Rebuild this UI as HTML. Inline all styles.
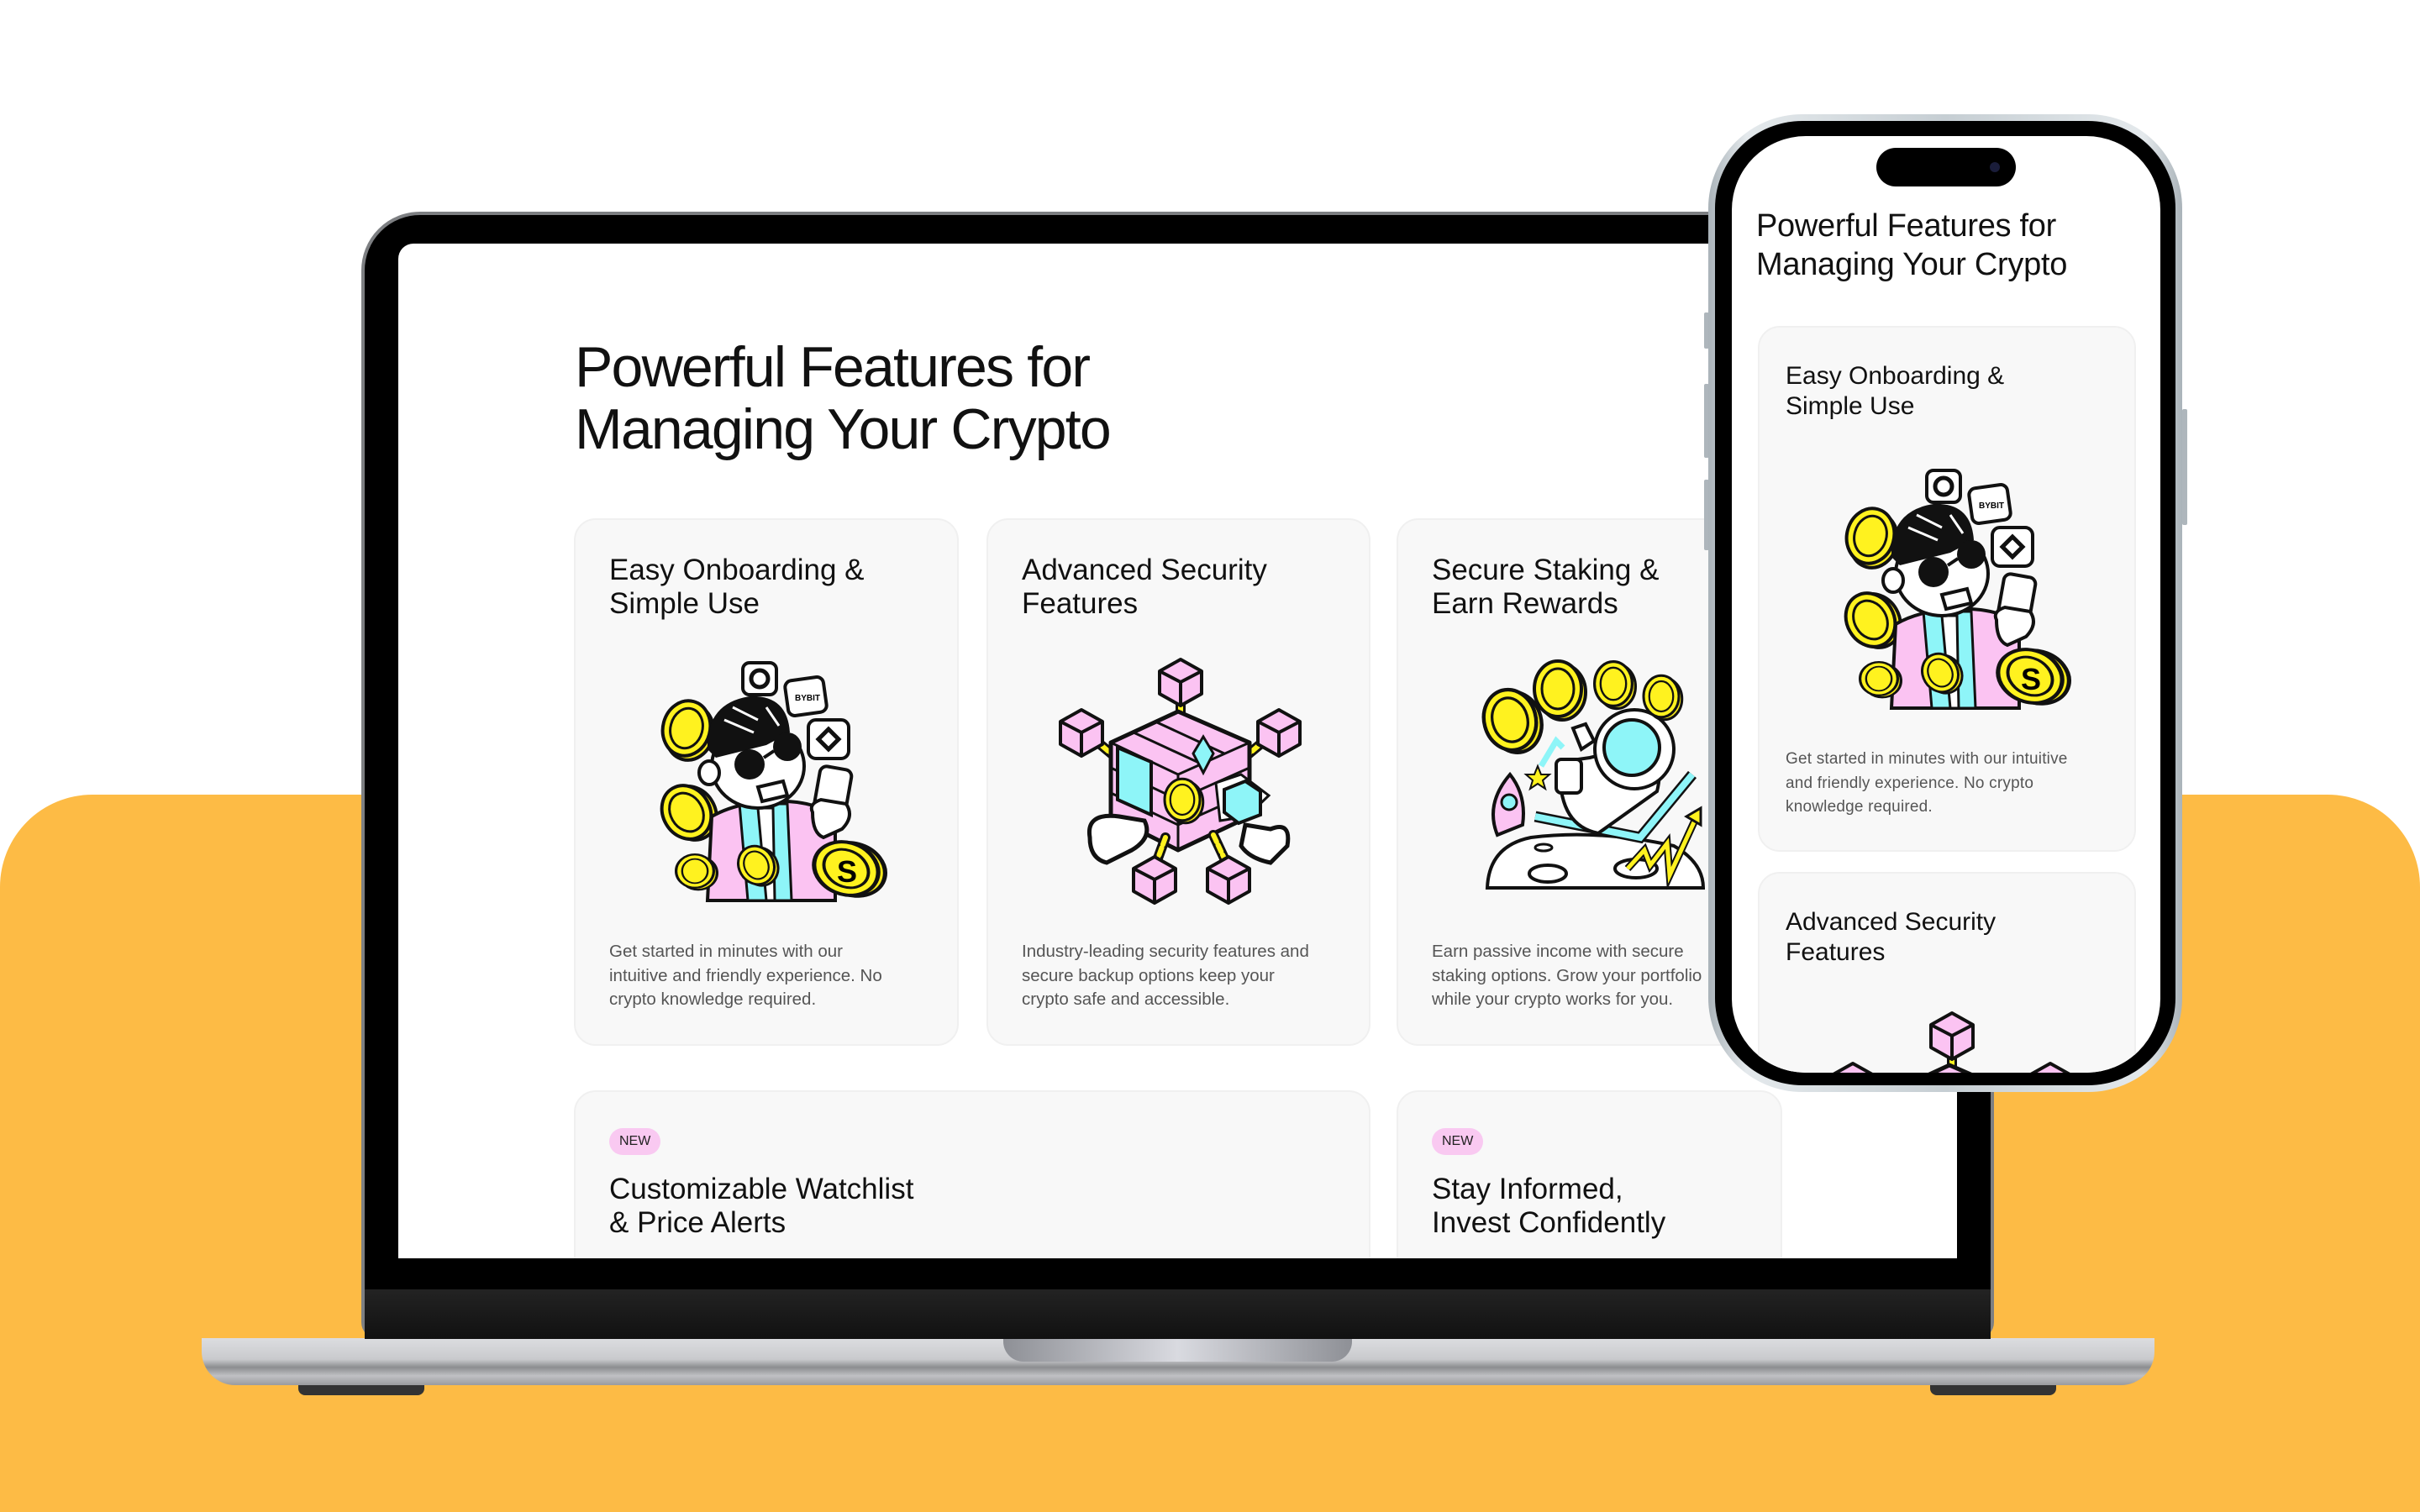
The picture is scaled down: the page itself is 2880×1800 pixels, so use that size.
<!DOCTYPE html>
<html><head><meta charset="utf-8"><style>
*{margin:0;padding:0;box-sizing:border-box}
body{width:2880px;height:1800px;overflow:hidden;background:#fff;position:relative;font-family:"Liberation Sans",sans-serif;color:#111}
.abs{position:absolute}
.orange{left:0;top:946px;width:2880px;height:854px;background:#FDBB45;border-radius:110px 110px 0 0}
.lap{left:430px;top:252px;width:1943px;height:1342px;background:#000;border-radius:70px 70px 20px 20px;border:4px solid #7d7f82}
.chin{left:434px;top:1535px;width:1935px;height:59px;background:linear-gradient(#232323,#111)}
.screen{left:474px;top:290px;width:1855px;height:1208px;background:#fff;border-radius:18px 18px 0 0;overflow:hidden}
.base{left:240px;top:1593px;width:2324px;height:56px;border-radius:0 0 40px 40px;background:linear-gradient(#dcdde0 0%,#c9cacd 45%,#8c8d90 62%,#bfc0c3 80%,#9a9b9e 100%)}
.notch{left:1194px;top:1593px;width:415px;height:28px;border-radius:0 0 24px 24px;background:linear-gradient(90deg,#8e9096,#d9dae0 50%,#8e9096)}
.foot{top:1649px;width:150px;height:12px;background:#333;border-radius:0 0 8px 8px}
.h1{font-size:68px;letter-spacing:-1.8px;line-height:74px;font-weight:400}
.card{background:#f8f8f8;border:2px solid #f0f0f0;border-radius:26px}
.ct{font-size:35px;letter-spacing:0px;line-height:40px;position:absolute;left:40px;top:40px}
.cd{font-size:20.5px;line-height:28.5px;color:#555;position:absolute;left:40px}
.badge{position:absolute;left:40px;top:43px;background:#F9C9F1;border-radius:16px;font-size:16px;padding:7px 12px;color:#222}
.phone{left:2033px;top:136px;width:564px;height:1164px;border-radius:112px;background:linear-gradient(90deg,#aab3b9,#e4e9ec 8%,#c6ced3 50%,#e4e9ec 92%,#aab3b9)}
.pblack{left:2041px;top:144px;width:548px;height:1148px;border-radius:104px;background:#000}
.pscreen{left:2061px;top:162px;width:510px;height:1115px;border-radius:88px;background:#fff;overflow:hidden}
.btn{background:#aeb6bc;width:6px;border-radius:2px}
</style></head><body>
<svg width="0" height="0" style="position:absolute">
<defs>
<g id="cube"><path d="M0,-27 L25,-13 L25,14 L0,28 L-25,14 L-25,-13Z" fill="#FBC3F2" stroke="#111" stroke-width="4" stroke-linejoin="round"/><path d="M-25,-13 L0,0 L25,-13 M0,0 L0,28" fill="none" stroke="#111" stroke-width="4"/></g>
<g id="coin"><ellipse cx="5" cy="4" rx="28" ry="33" fill="#F5E81A" stroke="#111" stroke-width="4"/><ellipse cx="0" cy="0" rx="28" ry="33" fill="#FFF21F" stroke="#111" stroke-width="4"/><ellipse cx="0" cy="0" rx="19" ry="24" fill="none" stroke="#111" stroke-width="3"/></g>
<g id="chain"><path d="M0,0 L0,40" stroke="#111" stroke-width="12" stroke-linecap="round"/><path d="M0,0 L0,40" stroke="#FFF21F" stroke-width="6" stroke-dasharray="9 4" stroke-linecap="round"/></g>
<g id="ill1">
<rect x="122" y="17" width="40" height="38" rx="8" fill="#fff" stroke="#111" stroke-width="4"/><circle cx="142" cy="36" r="10" fill="none" stroke="#111" stroke-width="5"/>
<rect x="174" y="36" width="46" height="42" rx="8" fill="#fff" stroke="#111" stroke-width="4" transform="rotate(-8 197 57)"/><text x="184" y="62" font-size="10" font-weight="bold" font-family="Liberation Sans,sans-serif">BYBIT</text>
<rect x="200" y="85" width="48" height="46" rx="9" fill="#fff" stroke="#111" stroke-width="4"/><path d="M224,96 L236,108 L224,120 L212,108Z" fill="none" stroke="#111" stroke-width="5"/>
<use href="#coin" transform="translate(55 95) rotate(15)"/>
<use href="#coin" transform="translate(55 195) rotate(-30)"/>
<path d="M80,300 L85,200 Q120,180 175,182 Q225,185 232,210 L232,300Z" fill="#FBC3F2" stroke="#111" stroke-width="4"/>
<path d="M118,185 L175,185 L180,300 L128,300Z" fill="#8EF5F8" stroke="#111" stroke-width="3"/>
<path d="M140,190 L158,190 L160,300 L150,300Z" fill="#fff" stroke="#111" stroke-width="3"/>
<ellipse cx="140" cy="140" rx="55" ry="50" fill="#fff" stroke="#111" stroke-width="4"/>
<ellipse cx="82" cy="148" rx="12" ry="14" fill="#fff" stroke="#111" stroke-width="4"/>
<path d="M80,120 Q78,65 130,57 Q175,55 178,100 L150,115 L90,130Z" fill="#111"/>
<path d="M110,70 L140,85 M100,85 L135,100 M150,70 L165,92" stroke="#fff" stroke-width="3"/>
<circle cx="130" cy="138" r="18" fill="#111"/><circle cx="175" cy="117" r="17" fill="#111"/><path d="M147,130 L159,122" stroke="#111" stroke-width="4"/>
<path d="M140,165 L170,158 L175,175 L145,182Z" fill="#fff" stroke="#111" stroke-width="4"/>
<rect x="210" y="142" width="38" height="55" rx="8" fill="#fff" stroke="#111" stroke-width="4" transform="rotate(10 229 170)"/>
<path d="M205,195 Q200,185 215,180 L245,185 Q255,200 240,215 L218,225 Q205,220 205,195Z" fill="#fff" stroke="#111" stroke-width="4"/>
<use href="#coin" transform="translate(65 265) scale(0.8 0.6)"/>
<use href="#coin" transform="translate(138 258) scale(0.75 0.7) rotate(-20)"/>
<use href="#coin" transform="translate(245 262) scale(1.3 1.0) rotate(-30)"/>
<text x="234" y="278" font-size="36" font-weight="bold" font-family="Liberation Sans,sans-serif">S</text>
</g>
<g id="ill2">
<use href="#chain" transform="translate(153 55)"/>
<use href="#chain" transform="translate(50 108) rotate(-50)"/>
<use href="#chain" transform="translate(255 108) rotate(50)"/>
<path d="M70,112 L150,75 L235,112 L235,200 L150,240 L70,200Z" fill="#FBC3F2" stroke="#111" stroke-width="5" stroke-linejoin="round"/>
<path d="M70,112 L150,150 L235,112 M150,150 L150,240 M97,100 L177,137 M125,88 L205,125 M70,142 L150,180 L235,142 M70,172 L150,210 L235,172" fill="none" stroke="#111" stroke-width="3"/>
<path d="M78,118 L118,135 L118,198 L78,180Z" fill="#8EF5F8" stroke="#111" stroke-width="4"/>
<path d="M180,105 L192,125 L180,148 L168,125Z" fill="#8EF5F8" stroke="#111" stroke-width="3"/>
<use href="#coin" transform="translate(155 180) scale(0.75)"/>
<path d="M195,160 L225,150 L258,175 L232,200 L200,205Z" fill="#fff" stroke="#111" stroke-width="3"/>
<path d="M205,168 L230,158 L248,170 L248,198 L222,208 L205,195Z" fill="#8EF5F8" stroke="#111" stroke-width="4"/>
<path d="M45,225 Q40,195 80,200 L110,205 Q120,225 95,240 L65,255 Q45,250 45,225Z" fill="#fff" stroke="#111" stroke-width="5"/>
<path d="M260,215 Q285,205 280,235 L260,255 Q235,250 225,235 L230,210Z" fill="#fff" stroke="#111" stroke-width="5"/>
<use href="#chain" transform="translate(135 225) rotate(20)"/>
<use href="#chain" transform="translate(192 222) rotate(-25)"/>
<use href="#cube" transform="translate(153 40)"/>
<use href="#cube" transform="translate(35 100)"/>
<use href="#cube" transform="translate(270 100)"/>
<use href="#cube" transform="translate(122 275)"/>
<use href="#cube" transform="translate(210 275)"/>
</g>
<g id="ill3">
<path d="M68,285 Q70,235 120,225 Q200,215 290,235 Q325,255 325,285Z" fill="#fff" stroke="#111" stroke-width="4"/>
<ellipse cx="140" cy="268" rx="22" ry="10" fill="none" stroke="#111" stroke-width="4"/><ellipse cx="245" cy="262" rx="25" ry="11" fill="none" stroke="#111" stroke-width="4"/><ellipse cx="135" cy="237" rx="10" ry="4" fill="none" stroke="#111" stroke-width="3"/>
<path d="M125,200 L250,225 L312,150" fill="none" stroke="#111" stroke-width="13"/><path d="M125,200 L250,225 L312,150" fill="none" stroke="#8EF5F8" stroke-width="8"/>
<path d="M155,135 Q150,210 200,220 L270,170 Q280,130 250,115 L190,130Z" fill="#fff" stroke="#111" stroke-width="4"/>
<rect x="150" y="132" width="30" height="40" rx="6" fill="#fff" stroke="#111" stroke-width="4"/>
<path d="M170,95 L185,90 L195,110 L180,120Z" fill="#fff" stroke="#111" stroke-width="4"/>
<circle cx="243" cy="120" r="47" fill="#fff" stroke="#111" stroke-width="4"/><circle cx="240" cy="118" r="33" fill="#8EF5F8" stroke="#111" stroke-width="4"/>
<path d="M95,150 Q115,175 110,210 L80,222 Q65,185 95,150Z" fill="#FBC3F2" stroke="#111" stroke-width="4"/><circle cx="94" cy="183" r="9" fill="#8EF5F8" stroke="#111" stroke-width="3"/>
<path d="M128,140 L132,150 L142,150 L134,157 L137,167 L128,161 L119,167 L122,157 L114,150 L124,150Z" fill="#FFF21F" stroke="#111" stroke-width="2"/>
<path d="M132,140 L150,110 L158,118" fill="none" stroke="#8EF5F8" stroke-width="7"/>
<path d="M235,262 L255,240 L262,258 L282,232 L285,270 L318,198" fill="none" stroke="#111" stroke-width="9"/><path d="M235,262 L255,240 L262,258 L282,232 L285,270 L318,198" fill="none" stroke="#FFF21F" stroke-width="5"/><path d="M305,200 L322,190 L322,210Z" fill="#FFF21F" stroke="#111" stroke-width="3"/>
<use href="#coin" transform="translate(95 85) scale(1.1) rotate(-15)"/>
<use href="#coin" transform="translate(152 48)"/>
<use href="#coin" transform="translate(218 42) scale(0.8)"/>
<use href="#coin" transform="translate(275 57) scale(0.75)"/>
</g>
</defs></svg>

<div class="abs orange"></div>
<div class="abs base"></div>
<div class="abs notch"></div>
<div class="abs foot" style="left:355px"></div>
<div class="abs foot" style="left:2297px"></div>
<div class="abs lap"></div>
<div class="abs chin"></div>
<div class="abs screen">
  <div class="abs h1" style="left:210px;top:110px">Powerful Features for<br>Managing Your Crypto</div>
  <div class="abs card" style="left:209px;top:327px;width:458px;height:628px">
    <div class="ct">Easy Onboarding &amp;<br>Simple Use</div>
    <svg class="abs" style="left:77px;top:153px" width="300" height="320"><use href="#ill1"/></svg>
    <div class="cd" style="top:500px">Get started in minutes with our<br>intuitive and friendly experience. No<br>crypto knowledge required.</div>
  </div>
  <div class="abs card" style="left:700px;top:327px;width:457px;height:628px">
    <div class="ct">Advanced Security<br>Features</div>
    <svg class="abs" style="left:76px;top:153px" width="350" height="320"><use href="#ill2"/></svg>
    <div class="cd" style="top:500px">Industry-leading security features and<br>secure backup options keep your<br>crypto safe and accessible.</div>
  </div>
  <div class="abs card" style="left:1188px;top:327px;width:459px;height:628px">
    <div class="ct">Secure Staking &amp;<br>Earn Rewards</div>
    <svg class="abs" style="left:38px;top:153px" width="350" height="320"><use href="#ill3"/></svg>
    <div class="cd" style="top:500px">Earn passive income with secure<br>staking options. Grow your portfolio<br>while your crypto works for you.</div>
  </div>
  <div class="abs card" style="left:209px;top:1008px;width:948px;height:300px">
    <div class="badge">NEW</div>
    <div class="ct" style="top:96px">Customizable Watchlist<br>&amp; Price Alerts</div>
  </div>
  <div class="abs card" style="left:1188px;top:1008px;width:459px;height:300px">
    <div class="badge">NEW</div>
    <div class="ct" style="top:96px">Stay Informed,<br>Invest Confidently</div>
  </div>
</div>

<div class="abs btn" style="left:2028px;top:372px;height:43px"></div>
<div class="abs btn" style="left:2028px;top:457px;height:88px"></div>
<div class="abs btn" style="left:2028px;top:571px;height:84px"></div>
<div class="abs btn" style="left:2597px;top:487px;height:138px"></div>
<div class="abs phone"></div>
<div class="abs pblack"></div>
<div class="abs pscreen">
  <div class="abs" style="left:29px;top:84px;font-size:38px;line-height:46px;letter-spacing:-0.3px">Powerful Features for<br>Managing Your Crypto</div>
  <div class="abs card" style="left:31px;top:226px;width:450px;height:626px">
    <div class="abs" style="left:31px;top:40px;font-size:30px;line-height:36px">Easy Onboarding &amp;<br>Simple Use</div>
    <svg class="abs" style="left:77px;top:153px" width="300" height="320"><use href="#ill1"/></svg>
    <div class="abs" style="left:31px;top:500px;font-size:19px;line-height:28.5px;color:#555;letter-spacing:0.2px">Get started in minutes with our intuitive<br>and friendly experience. No crypto<br>knowledge required.</div>
  </div>
  <div class="abs card" style="left:31px;top:876px;width:450px;height:500px">
    <div class="abs" style="left:31px;top:40px;font-size:30px;line-height:36px">Advanced Security<br>Features</div>
    <svg class="abs" style="left:76px;top:153px" width="350" height="320"><use href="#ill2"/></svg>
  </div>
</div>
<div class="abs" style="left:2233px;top:176px;width:166px;height:46px;border-radius:23px;background:#000"></div>
<div class="abs" style="left:2368px;top:193px;width:12px;height:12px;border-radius:6px;background:#1a1d3a"></div>
</body></html>
